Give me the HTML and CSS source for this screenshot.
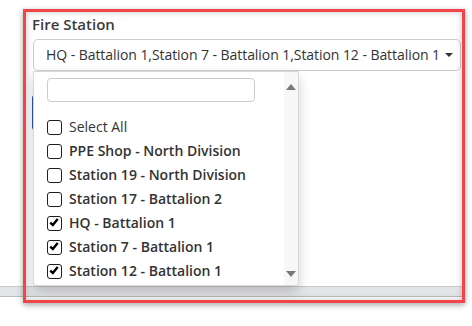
FILE: index.html
```html
<!DOCTYPE html>
<html lang="en">
<head>
    <meta charset="UTF-8">
    <meta name="viewport" content="width=device-width, initial-scale=1.0">
    <title>Fire Station</title>
    <link rel="stylesheet" href="styles.css">
</head>
<body>
    <div class="page">
        <div class="field">
            <label class="field-label" for="stationSearch">Fire Station</label>
            <div class="multiselect">
                <button class="multiselect-toggle" type="button">
                    <span class="multiselect-text">HQ - Battalion 1,Station 7 - Battalion 1,Station 12 - Battalion 1</span>
                    <span class="caret"></span>
                </button>
                <div class="dropdown">
                    <div class="dropdown-body">
                        <input class="search" type="text" id="stationSearch">
                        <ul class="options">
                            <li class="option option-all"><span class="box"></span>Select All</li>
                            <li class="option"><span class="box"></span>PPE Shop - North Division</li>
                            <li class="option"><span class="box"></span>Station 19 - North Division</li>
                            <li class="option"><span class="box"></span>Station 17 - Battalion 2</li>
                            <li class="option"><span class="box checked"><svg viewBox="0 0 15 15"><path d="M2.6 6.4 L5.6 9.2 L11.2 2.4" /></svg></span>HQ - Battalion 1</li>
                            <li class="option"><span class="box checked"><svg viewBox="0 0 15 15"><path d="M2.6 6.4 L5.6 9.2 L11.2 2.4" /></svg></span>Station 7 - Battalion 1</li>
                            <li class="option"><span class="box checked"><svg viewBox="0 0 15 15"><path d="M2.6 6.4 L5.6 9.2 L11.2 2.4" /></svg></span>Station 12 - Battalion 1</li>
                        </ul>
                    </div>
                    <div class="scrollbar">
                        <span class="arrow-up"></span>
                        <span class="arrow-down"></span>
                    </div>
                </div>
            </div>
            <button class="btn-primary" type="button" aria-label="Search"></button>
        </div>
        <div class="hscroll"></div>
        <div class="highlight"></div>
    </div>
</body>
</html>
```

FILE: styles.css
```css
body {
    margin: 0;
    background: #fff;
    font-family: "Open Sans", "Liberation Sans", sans-serif;
    color: #333;
    overflow: hidden;
}
.page {
    position: relative;
    height: 326px;
    display: flex;
    flex-direction: column;
}
.field {
    flex: 1;
    padding: 14px 0 0 32px;
}
.field-label {
    display: block;
    font-size: 15px;
    line-height: 20px;
    font-weight: 600;
    color: #3b3b3b;
}
.multiselect {
    position: relative;
    margin: 5px 0 0 1px;
    width: 428px;
    z-index: 2;
}
.multiselect-toggle {
    display: flex;
    align-items: center;
    width: 100%;
    height: 32px;
    padding: 0 7px 0 12px;
    box-sizing: border-box;
    background: #fff;
    border: 1px solid #ccc;
    border-radius: 5px;
    font-family: inherit;
    font-size: 14px;
    line-height: 20px;
    color: #333;
    text-align: left;
}
.multiselect-text {
    flex: 1;
    white-space: nowrap;
    letter-spacing: -0.06px;
}
.caret {
    width: 0;
    height: 0;
    border-top: 4px solid #333;
    border-left: 4px solid transparent;
    border-right: 4px solid transparent;
    margin-left: 0;
}
.dropdown {
    position: absolute;
    top: 32px;
    left: 0;
    width: 266px;
    height: 215px;
    box-sizing: border-box;
    display: flex;
    background: #fff;
    border: 1px solid rgba(0, 0, 0, 0.15);
    border-radius: 0 0 4px 4px;
    box-shadow: 0 6px 12px rgba(0, 0, 0, 0.18);
    overflow: hidden;
}
.dropdown-body {
    flex: 1;
    padding: 6px 0 0 13px;
    overflow: hidden;
}
.search {
    display: block;
    width: 208px;
    height: 24px;
    box-sizing: border-box;
    border: 1px solid #ccc;
    border-radius: 4px;
    margin: 0;
}
.options {
    list-style: none;
    margin: 13px 0 0;
    padding: 0;
}
.option {
    display: flex;
    align-items: center;
    height: 24px;
    font-size: 14px;
    line-height: 20px;
    font-weight: 600;
    color: #333;
    white-space: nowrap;
}
.option-all {
    font-weight: 400;
}
.box {
    width: 15px;
    height: 15px;
    box-sizing: border-box;
    border: 1.4px solid #1e1e1e;
    border-radius: 3px;
    margin-right: 7px;
    flex-shrink: 0;
    display: flex;
}
.box svg {
    width: 13px;
    height: 13px;
}
.box path {
    fill: none;
    stroke: #000;
    stroke-width: 2.8;
}
.scrollbar {
    width: 14px;
    background: #f7f7f7;
    display: flex;
    flex-direction: column;
    justify-content: space-between;
    align-items: center;
    padding: 12px 0 8px;
    box-sizing: border-box;
}
.arrow-up {
    width: 0;
    height: 0;
    border-left: 5px solid transparent;
    border-right: 5px solid transparent;
    border-bottom: 6px solid #7a7a7a;
}
.arrow-down {
    width: 0;
    height: 0;
    border-left: 5px solid transparent;
    border-right: 5px solid transparent;
    border-top: 6px solid #7a7a7a;
}
.btn-primary {
    display: block;
    margin-top: 24px;
    height: 35px;
    width: 90px;
    border: none;
    border-radius: 3px 0 0 3px;
    background: #2f52bd;
}
.hscroll {
    width: 463px;
    height: 11px;
    box-sizing: border-box;
    margin-bottom: 29px;
    background: #e3e4e7;
    border-top: 1px solid #cacacc;
    border-bottom: 1px solid #bcbcbe;
}
.highlight {
    position: absolute;
    left: 23px;
    top: 9px;
    width: 442px;
    height: 294px;
    box-sizing: border-box;
    border: 3px solid #f2444b;
    box-shadow: 0 2px 6px rgba(0, 0, 0, 0.35), inset 0 0 6px rgba(0, 0, 0, 0.22);
    pointer-events: none;
    z-index: 3;
}
```
